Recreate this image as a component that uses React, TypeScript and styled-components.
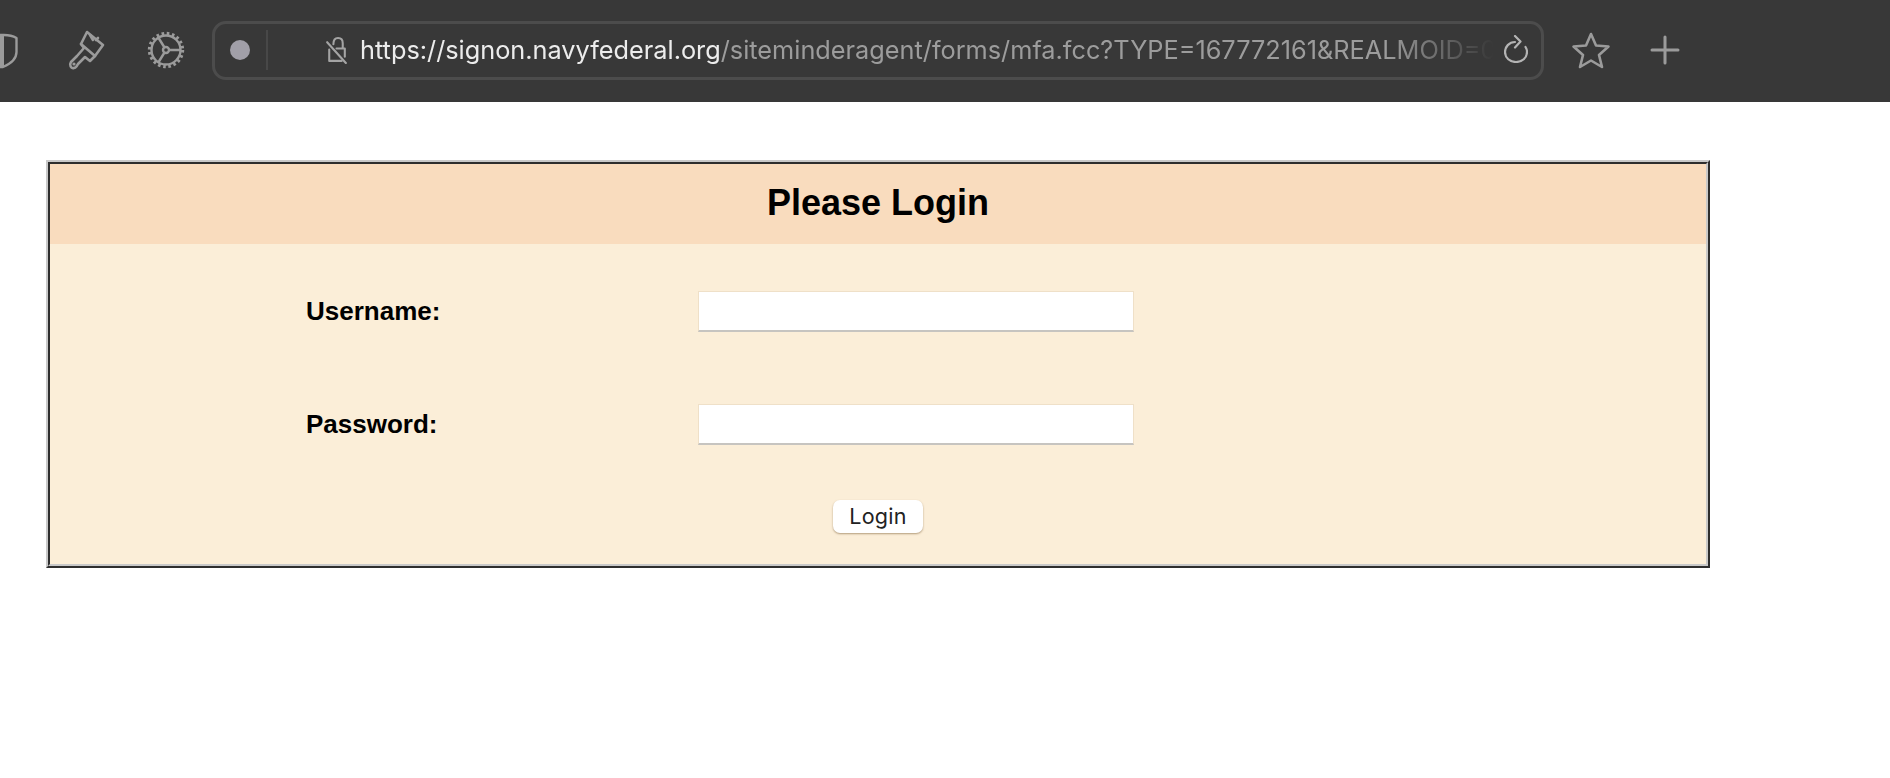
import React from 'react';
import styled, { createGlobalStyle } from 'styled-components';

const GlobalStyle = createGlobalStyle`
  html, body {
    margin: 0;
    padding: 0;
    background: #ffffff;
  }

  body {
    font-family: 'Liberation Sans', Arial, sans-serif;
  }
`;

const App: React.FC = () => {
  return (
    <Page>
      <GlobalStyle />
      <Toolbar>
        <ToolIcon $width={18} viewBox="0 0 18 36">
          <path d="M0 3 L4 3 C8 3 13 4 16.5 6 L16.5 20 C16.5 27 10 32 3 35 L0 35 Z" fill="none" stroke="#9b9b9b" strokeWidth="2.4" strokeLinejoin="round" />
          <path d="M-1 3 L4 3 L4 34 L-1 34 Z" fill="#9b9b9b" />
        </ToolIcon>
        <ToolIcon $width={36} $gap={50} viewBox="0 0 36 40">
          <g fill="none" stroke="#9b9b9b" strokeWidth="2.6" strokeLinejoin="round" strokeLinecap="round">
            <path d="M19 2 L35 15 L27 26 L13 14 Z" />
            <path d="M22 5 L25 10 M28 10 L30 8" />
            <path d="M13 14 L16 18 L9 26 C7 28 5 30 3 32 C1 35 3 39 6 38 C8 38 9 36 10 34 L17 27 L22 31 L27 26" />
          </g>
          <circle cx="6" cy="34" r="1.6" fill="#9b9b9b" />
        </ToolIcon>
        <ToolIcon $width={36} $gap={44} viewBox="0 0 36 36">
          <g fill="none" stroke="#9b9b9b">
            <circle cx="18" cy="18" r="14.5" strokeWidth="2.4" />
            <circle cx="18" cy="18" r="16.5" strokeWidth="3.4" strokeDasharray="2.6 2.6" />
            <circle cx="18" cy="18" r="3" strokeWidth="2.4" />
            <path d="M21 18 L33 18 M16.5 15.5 L10 5 M16.5 20.5 L10 31" strokeWidth="2.4" />
          </g>
        </ToolIcon>
        <AddressBar>
          <RecordDot />
          <BarDivider />
          <LockIcon viewBox="0 0 20 26">
            <g fill="none" stroke="#a4a4a4" strokeWidth="2" strokeLinecap="round" strokeLinejoin="round">
              <path d="M7 7 C7 3 9 1 11.5 1 C14.5 1 16 3 16 6 L16 11 M10 11 L18 11 L18 19" />
              <path d="M3 12 L3 23 L15 23" />
              <path d="M1 5 L19 25" />
            </g>
          </LockIcon>
          <Url>
            <UrlHost>https://signon.navyfederal.org</UrlHost>
            /siteminderagent/forms/mfa.fcc?TYPE=167772161&amp;REALMOID=06-000
          </Url>
          <ReloadIcon viewBox="0 0 24 28">
            <g fill="none" stroke="#b4b4b4" strokeWidth="2.2" strokeLinecap="round" strokeLinejoin="round">
              <path d="M11 7 C5 7 1 12 1 17 C1 23 6 27 12 27 C18 27 23 23 23 17 C23 15 22.5 13.5 21.5 12" />
              <path d="M11 1 L16.5 6.5 L11 12.5" />
            </g>
          </ReloadIcon>
        </AddressBar>
        <ToolIcon $width={38} $gap={28} viewBox="0 0 38 36">
          <path d="M19 2 L24 13.5 L36.5 14.5 L27 23 L30 35 L19 28.5 L8 35 L11 23 L1.5 14.5 L14 13.5 Z" fill="none" stroke="#9b9b9b" strokeWidth="2.6" strokeLinejoin="round" />
        </ToolIcon>
        <ToolIcon $width={28} $gap={41} viewBox="0 0 28 28">
          <path d="M14 1 L14 27 M1 14 L27 14" fill="none" stroke="#9b9b9b" strokeWidth="3" strokeLinecap="round" />
        </ToolIcon>
      </Toolbar>

      <Content>
        <Panel>
          <PanelInner>
            <PanelTitle>Please Login</PanelTitle>
            <PanelBody>
              <FormRow>
                <FieldLabel htmlFor="username">Username:</FieldLabel>
                <TextInput id="username" type="text" />
              </FormRow>
              <FormRow>
                <FieldLabel htmlFor="password">Password:</FieldLabel>
                <TextInput id="password" type="password" />
              </FormRow>
              <Actions>
                <LoginButton type="button">Login</LoginButton>
              </Actions>
            </PanelBody>
          </PanelInner>
        </Panel>
      </Content>
    </Page>
  );
};

const Page = styled.div`
  width: 1890px;
  height: 778px;
  overflow: hidden;
  background: #ffffff;
`;

const Toolbar = styled.div`
  display: flex;
  align-items: center;
  height: 102px;
  padding-bottom: 2px;
  box-sizing: border-box;
  background: #383838;
`;

const ToolIcon = styled.svg<{ $width: number; $gap?: number }>`
  flex: none;
  width: ${(p) => p.$width}px;
  height: auto;
  margin-left: ${(p) => p.$gap ?? 0}px;
  overflow: visible;
`;

const AddressBar = styled.div`
  flex: none;
  display: flex;
  align-items: center;
  box-sizing: border-box;
  width: 1332px;
  height: 59px;
  margin-left: 28px;
  padding: 0 13px 0 15px;
  border: 3px solid #4c4c4c;
  border-radius: 14px;
`;

const RecordDot = styled.div`
  flex: none;
  width: 20px;
  height: 20px;
  border-radius: 50%;
  background: #a19fa8;
`;

const BarDivider = styled.div`
  flex: none;
  width: 2px;
  height: 40px;
  margin-left: 16px;
  background: #484848;
`;

const LockIcon = styled.svg`
  flex: none;
  width: 21px;
  height: 27px;
  margin-left: 58px;
`;

const Url = styled.div`
  flex: 1;
  min-width: 0;
  margin-left: 13px;
  overflow: hidden;
  white-space: nowrap;
  font-family: Inter, 'Liberation Sans', sans-serif;
  font-size: 25.3px;
  line-height: 34px;
  color: #9c9c9c;
  -webkit-mask-image: linear-gradient(to right, #000 90%, transparent 99.3%);
  mask-image: linear-gradient(to right, #000 90%, transparent 99.3%);
`;

const UrlHost = styled.span`
  color: #ececec;
`;

const ReloadIcon = styled.svg`
  flex: none;
  width: 24px;
  height: 28px;
  margin-left: 2px;
  margin-top: -2px;
`;

const Content = styled.div`
  padding: 58px 0 0 46px;
`;

const Panel = styled.div`
  box-sizing: border-box;
  width: 1664px;
  height: 408px;
  border: 2px solid;
  border-color: #c9c9c9 #2e2e2e #2e2e2e #c9c9c9;
`;

const PanelInner = styled.div`
  display: flex;
  flex-direction: column;
  box-sizing: border-box;
  height: 100%;
  border: 2px solid;
  border-color: #2e2e2e #c9c9c9 #c9c9c9 #2e2e2e;
`;

const PanelTitle = styled.h1`
  flex: none;
  height: 80px;
  margin: 0;
  background: #f9dcbe;
  font-size: 36px;
  font-weight: 700;
  line-height: 78px;
  text-align: center;
  color: #000000;
`;

const PanelBody = styled.div`
  flex: 1;
  display: flex;
  flex-direction: column;
  padding-top: 47px;
  background: #fbeed8;
`;

const FormRow = styled.div`
  display: grid;
  grid-template-columns: 392px 436px;
  align-items: center;
  height: 41px;
  margin-bottom: 72px;
  padding-left: 256px;
`;

const FieldLabel = styled.label`
  font-size: 26px;
  font-weight: 700;
  color: #000000;
`;

const TextInput = styled.input`
  box-sizing: border-box;
  width: 436px;
  height: 41px;
  margin: 0;
  padding: 0 6px;
  background: #ffffff;
  border: 0;
  border-top: 1px solid #efe0c8;
  border-left: 1px solid #efe0c8;
  border-right: 1px solid #efe0c8;
  border-bottom: 2px solid #c6c4c0;
  outline: none;
`;

const Actions = styled.div`
  display: flex;
  justify-content: center;
  margin-top: -17px;
`;

const LoginButton = styled.button`
  box-sizing: border-box;
  width: 90px;
  height: 33px;
  padding: 0 0 1px;
  background: #ffffff;
  border: 0;
  border-radius: 7px;
  box-shadow: 0 1px 2px rgba(120, 90, 50, 0.55);
  font-family: Inter, 'Liberation Sans', sans-serif;
  font-size: 21.5px;
  letter-spacing: 0.3px;
  line-height: 30px;
  color: #222222;
`;

export default App;
